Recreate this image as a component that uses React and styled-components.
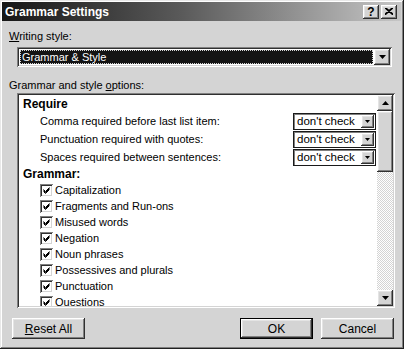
import React from 'react'
import styled, { createGlobalStyle } from 'styled-components'

const GlobalStyle = createGlobalStyle`
  html, body {
    margin: 0;
    padding: 0;
    background: #d4d4d4;
  }
  body {
    font-family: 'Liberation Sans', Arial, sans-serif;
    font-size: 11px;
    color: #000;
  }
`

const raised = `
  box-shadow: inset -1px -1px #303030, inset 1px 1px #ffffff,
    inset -2px -2px #808080, inset 2px 2px #e4e4e4;
`

const sunken = `
  box-shadow: inset 1px 1px #808080, inset -1px -1px #ffffff,
    inset 2px 2px #303030, inset -2px -2px #d4d4d4;
`

const Window = styled.div`
  width: 404px;
  height: 349px;
  box-sizing: border-box;
  padding: 2px 3px 3px 2px;
  background: #d4d4d4;
  display: flex;
  flex-direction: column;
  box-shadow: inset -1px -1px #202020, inset 1px 1px #e8e8e8,
    inset -2px -2px #808080, inset 2px 2px #ffffff;
`

const TitleBar = styled.div`
  height: 19px;
  flex: none;
  display: flex;
  align-items: center;
  justify-content: space-between;
  padding: 0 4px 0 3px;
  background: linear-gradient(to right, #161616 0%, #5a5a5a 45%, #c6c6c6 100%);
`

const Title = styled.div`
  color: #fff;
  font-weight: bold;
  font-size: 12px;
`

const CaptionButtons = styled.div`
  display: flex;
  gap: 2px;
`

const CaptionButton = styled.div`
  width: 16px;
  height: 14px;
  box-sizing: border-box;
  background: #d4d4d4;
  display: flex;
  align-items: center;
  justify-content: center;
  font-weight: bold;
  font-size: 12px;
  line-height: 1;
  ${raised}
`

const Body = styled.div`
  flex: 1;
  display: flex;
  flex-direction: column;
  padding: 0 6px 0 8px;
`

const Label = styled.div`
  margin: ${p => p.$top}px 0 0 -1px;
  height: 14px;
  line-height: 14px;
  u { text-decoration: underline; }
`

const Combo = styled.div`
  margin: 4px 3px 0 7px;
  height: 20px;
  box-sizing: border-box;
  padding: 2px;
  display: flex;
  background: #fff;
  ${sunken}
`

const ComboValue = styled.div`
  flex: 1;
  margin: 1px;
  background: #141414;
  color: #fff;
  outline: 1px dotted #d4d4d4;
  outline-offset: -1px;
  line-height: 14px;
  padding-left: 2px;
`

const ArrowButton = styled.div`
  width: ${p => p.$size}px;
  height: ${p => p.$size}px;
  flex: none;
  box-sizing: border-box;
  background: #d4d4d4;
  display: flex;
  align-items: center;
  justify-content: center;
  ${raised}
`

const ListBox = styled.div`
  margin: 1px 0 0 7px;
  height: 215px;
  box-sizing: border-box;
  padding: 2px;
  display: flex;
  background: #fff;
  ${sunken}
`

const ListContent = styled.div`
  flex: 1;
  overflow: hidden;
  padding-left: 4px;
`

const Row = styled.div`
  display: flex;
  align-items: center;
  height: ${p => p.$h}px;
  padding-left: ${p => p.$indent || 0}px;
  font-weight: ${p => (p.$bold ? 'bold' : 'normal')};
  font-size: ${p => (p.$bold ? '12px' : '11px')};
`

const RuleText = styled.div`
  flex: 1;
`

const SmallCombo = styled.div`
  width: 83px;
  height: 17px;
  margin-right: 1px;
  box-sizing: border-box;
  border: 1px solid #1a1a1a;
  box-shadow: inset 1px 1px #808080;
  background: #fff;
  display: flex;
  align-items: center;
  padding: 0 1px 0 3px;
  font-size: 11.5px;
`

const SmallComboText = styled.div`
  flex: 1;
`

const CheckBox = styled.div`
  width: 13px;
  height: 13px;
  box-sizing: border-box;
  margin-right: 2px;
  background: #fff;
  display: flex;
  align-items: center;
  justify-content: center;
  ${sunken}
`

const ScrollBar = styled.div`
  width: 16px;
  flex: none;
  display: flex;
  flex-direction: column;
  background: repeating-conic-gradient(#ffffff 0 25%, #d4d4d4 0 50%) 0 0 / 2px 2px;
`

const Thumb = styled.div`
  height: 61px;
  background: #d4d4d4;
  ${raised}
`

const Track = styled.div`
  flex: 1;
`

const ButtonRow = styled.div`
  display: flex;
  gap: 8px;
  margin-top: 10px;
  padding-left: 2px;
  padding-right: 1px;
`

const Button = styled.div`
  width: 73px;
  height: 21px;
  box-sizing: border-box;
  display: flex;
  align-items: center;
  justify-content: center;
  background: #d4d4d4;
  font-size: 12px;
  ${p =>
    p.$default
      ? `border: 1px solid #000;
         box-shadow: inset -1px -1px #303030, inset 1px 1px #ffffff,
           inset -2px -2px #808080, inset 2px 2px #e4e4e4;`
      : raised}
  u { text-decoration: underline; }
`

const Spacer = styled.div`
  flex: 1;
`

const Arrow = ({ up, w = 7 }) => {
  const h = Math.ceil(w / 2)
  return (
    <svg width={w} height={h} viewBox={`0 0 ${w} ${h}`}>
      <polygon
        points={up ? `0,${h} ${w},${h} ${w / 2},0` : `0,0 ${w},0 ${w / 2},${h}`}
        fill="#000"
      />
    </svg>
  )
}

const Check = () => (
  <svg width="7" height="7" viewBox="0 0 7 7">
    <path d="M0.5 2.5 L2.5 4.5 L6.5 0.5 M0.5 3.5 L2.5 5.5 L6.5 1.5 M0.5 4.5 L2.5 6.5 L6.5 2.5" stroke="#000" strokeWidth="1" fill="none" />
  </svg>
)

const CloseGlyph = () => (
  <svg width="8" height="7" viewBox="0 0 8 7">
    <path d="M0 0 L8 7 M1 0 L8 6 M0 7 L8 0 M0 6 L7 0" stroke="#000" strokeWidth="1.2" fill="none" />
  </svg>
)

const rules = [
  'Comma required before last list item:',
  'Punctuation required with quotes:',
  'Spaces required between sentences:',
]

const grammar = [
  'Capitalization',
  'Fragments and Run-ons',
  'Misused words',
  'Negation',
  'Noun phrases',
  'Possessives and plurals',
  'Punctuation',
  'Questions',
]

export default function App() {
  return (
    <>
      <GlobalStyle />
      <Window>
        <TitleBar>
          <Title>Grammar Settings</Title>
          <CaptionButtons>
            <CaptionButton>?</CaptionButton>
            <CaptionButton><CloseGlyph /></CaptionButton>
          </CaptionButtons>
        </TitleBar>
        <Body>
          <Label $top={8}><u>W</u>riting style:</Label>
          <Combo>
            <ComboValue>Grammar &amp; Style</ComboValue>
            <ArrowButton $size={16}><Arrow /></ArrowButton>
          </Combo>
          <Label $top={11}>Grammar and style <u>o</u>ptions:</Label>
          <ListBox>
            <ListContent>
              <Row $h={17} $bold>Require</Row>
              {rules.map(r => (
                <Row key={r} $h={18} $indent={17}>
                  <RuleText>{r}</RuleText>
                  <SmallCombo>
                    <SmallComboText>don't check</SmallComboText>
                    <ArrowButton $size={13}><Arrow w={5} /></ArrowButton>
                  </SmallCombo>
                </Row>
              ))}
              <Row $h={16} $bold>Grammar:</Row>
              {grammar.map(g => (
                <Row key={g} $h={16} $indent={17}>
                  <CheckBox><Check /></CheckBox>
                  {g}
                </Row>
              ))}
            </ListContent>
            <ScrollBar>
              <ArrowButton $size={16}><Arrow up /></ArrowButton>
              <Thumb />
              <Track />
              <ArrowButton $size={16}><Arrow /></ArrowButton>
            </ScrollBar>
          </ListBox>
          <ButtonRow>
            <Button><u>R</u>eset All</Button>
            <Spacer />
            <Button $default>OK</Button>
            <Button>Cancel</Button>
          </ButtonRow>
        </Body>
      </Window>
    </>
  )
}
